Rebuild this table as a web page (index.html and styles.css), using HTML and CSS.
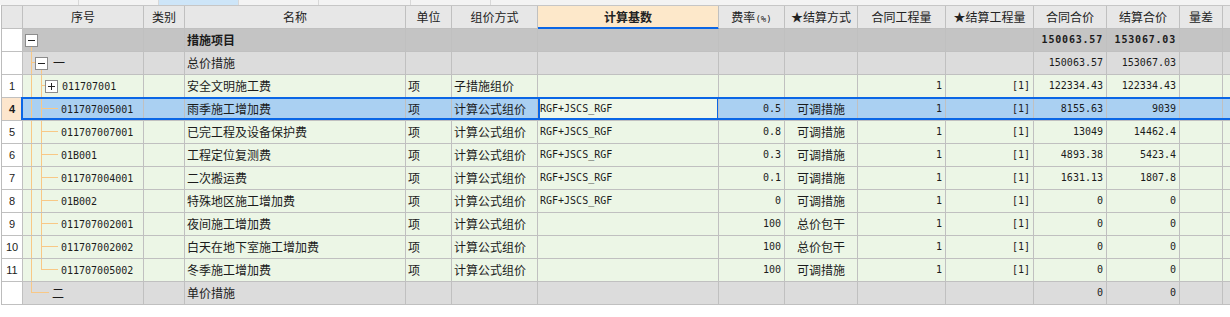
FILE: index.html
```html
<!DOCTYPE html>
<html lang="zh-CN">
<head>
<meta charset="utf-8">
<title>措施项目</title>
<link rel="stylesheet" href="styles.css">
</head>
<body>
<div class="strip"><span></span><span></span><span class="on"></span><span></span><span class="wide"></span><span></span></div>
<div class="grid">
  <div class="row hdr">
    <div class="c rn"></div>
    <div class="c h">序号</div>
    <div class="c h">类别</div>
    <div class="c h">名称</div>
    <div class="c h">单位</div>
    <div class="c h">组价方式</div>
    <div class="c h hot">计算基数</div>
    <div class="c h">费率<span class="pct">(%)</span></div>
    <div class="c h">★结算方式</div>
    <div class="c h">合同工程量</div>
    <div class="c h">★结算工程量</div>
    <div class="c h">合同合价</div>
    <div class="c h">结算合价</div>
    <div class="c h">量差</div>
    <div class="c h"></div>
  </div>

  <div class="row g1">
    <div class="c rn"></div>
    <div class="c seq lv1 t-top"><span class="bx"></span></div>
    <div class="c"></div>
    <div class="c b">措施项目</div>
    <div class="c"></div><div class="c"></div><div class="c"></div><div class="c"></div><div class="c"></div><div class="c"></div><div class="c"></div>
    <div class="c m r b">150063.57</div>
    <div class="c m r b">153067.03</div>
    <div class="c"></div><div class="c"></div>
  </div>

  <div class="row g2">
    <div class="c rn"></div>
    <div class="c seq lv2 t-head"><span class="bx"></span><span class="lab">一</span></div>
    <div class="c"></div>
    <div class="c">总价措施</div>
    <div class="c"></div><div class="c"></div><div class="c"></div><div class="c"></div><div class="c"></div><div class="c"></div><div class="c"></div>
    <div class="c m r">150063.57</div>
    <div class="c m r">153067.03</div>
    <div class="c"></div><div class="c"></div>
  </div>

  <div class="row d">
    <div class="c rn">1</div>
    <div class="c seq lv3 t-plus"><span class="bx plus"></span><span class="code">011707001</span></div>
    <div class="c"></div>
    <div class="c">安全文明施工费</div>
    <div class="c">项</div>
    <div class="c">子措施组价</div>
    <div class="c"></div>
    <div class="c"></div>
    <div class="c"></div>
    <div class="c m r">1</div>
    <div class="c m r">[1]</div>
    <div class="c m r">122334.43</div>
    <div class="c m r">122334.43</div>
    <div class="c"></div><div class="c"></div>
  </div>

  <div class="row d sel">
    <div class="c rn">4</div>
    <div class="c seq leaf t-leaf"><span class="code">011707005001</span></div>
    <div class="c"></div>
    <div class="c">雨季施工增加费</div>
    <div class="c">项</div>
    <div class="c">计算公式组价</div>
    <div class="c m edit">RGF+JSCS_RGF</div>
    <div class="c m r">0.5</div>
    <div class="c ctr">可调措施</div>
    <div class="c m r">1</div>
    <div class="c m r">[1]</div>
    <div class="c m r">8155.63</div>
    <div class="c m r">9039</div>
    <div class="c"></div><div class="c"></div>
  </div>

  <div class="row d">
    <div class="c rn">5</div>
    <div class="c seq leaf t-leaf"><span class="code">011707007001</span></div>
    <div class="c"></div>
    <div class="c">已完工程及设备保护费</div>
    <div class="c">项</div>
    <div class="c">计算公式组价</div>
    <div class="c m">RGF+JSCS_RGF</div>
    <div class="c m r">0.8</div>
    <div class="c ctr">可调措施</div>
    <div class="c m r">1</div>
    <div class="c m r">[1]</div>
    <div class="c m r">13049</div>
    <div class="c m r">14462.4</div>
    <div class="c"></div><div class="c"></div>
  </div>

  <div class="row d">
    <div class="c rn">6</div>
    <div class="c seq leaf t-leaf"><span class="code">01B001</span></div>
    <div class="c"></div>
    <div class="c">工程定位复测费</div>
    <div class="c">项</div>
    <div class="c">计算公式组价</div>
    <div class="c m">RGF+JSCS_RGF</div>
    <div class="c m r">0.3</div>
    <div class="c ctr">可调措施</div>
    <div class="c m r">1</div>
    <div class="c m r">[1]</div>
    <div class="c m r">4893.38</div>
    <div class="c m r">5423.4</div>
    <div class="c"></div><div class="c"></div>
  </div>

  <div class="row d">
    <div class="c rn">7</div>
    <div class="c seq leaf t-leaf"><span class="code">011707004001</span></div>
    <div class="c"></div>
    <div class="c">二次搬运费</div>
    <div class="c">项</div>
    <div class="c">计算公式组价</div>
    <div class="c m">RGF+JSCS_RGF</div>
    <div class="c m r">0.1</div>
    <div class="c ctr">可调措施</div>
    <div class="c m r">1</div>
    <div class="c m r">[1]</div>
    <div class="c m r">1631.13</div>
    <div class="c m r">1807.8</div>
    <div class="c"></div><div class="c"></div>
  </div>

  <div class="row d">
    <div class="c rn">8</div>
    <div class="c seq leaf t-leaf"><span class="code">01B002</span></div>
    <div class="c"></div>
    <div class="c">特殊地区施工增加费</div>
    <div class="c">项</div>
    <div class="c">计算公式组价</div>
    <div class="c m">RGF+JSCS_RGF</div>
    <div class="c m r">0</div>
    <div class="c ctr">可调措施</div>
    <div class="c m r">1</div>
    <div class="c m r">[1]</div>
    <div class="c m r">0</div>
    <div class="c m r">0</div>
    <div class="c"></div><div class="c"></div>
  </div>

  <div class="row d">
    <div class="c rn">9</div>
    <div class="c seq leaf t-leaf"><span class="code">011707002001</span></div>
    <div class="c"></div>
    <div class="c">夜间施工增加费</div>
    <div class="c">项</div>
    <div class="c">计算公式组价</div>
    <div class="c"></div>
    <div class="c m r">100</div>
    <div class="c ctr">总价包干</div>
    <div class="c m r">1</div>
    <div class="c m r">[1]</div>
    <div class="c m r">0</div>
    <div class="c m r">0</div>
    <div class="c"></div><div class="c"></div>
  </div>

  <div class="row d">
    <div class="c rn">10</div>
    <div class="c seq leaf t-leaf"><span class="code">011707002002</span></div>
    <div class="c"></div>
    <div class="c">白天在地下室施工增加费</div>
    <div class="c">项</div>
    <div class="c">计算公式组价</div>
    <div class="c"></div>
    <div class="c m r">100</div>
    <div class="c ctr">总价包干</div>
    <div class="c m r">1</div>
    <div class="c m r">[1]</div>
    <div class="c m r">0</div>
    <div class="c m r">0</div>
    <div class="c"></div><div class="c"></div>
  </div>

  <div class="row d">
    <div class="c rn">11</div>
    <div class="c seq leaf t-last"><span class="code">011707005002</span></div>
    <div class="c"></div>
    <div class="c">冬季施工增加费</div>
    <div class="c">项</div>
    <div class="c">计算公式组价</div>
    <div class="c"></div>
    <div class="c m r">100</div>
    <div class="c ctr">可调措施</div>
    <div class="c m r">1</div>
    <div class="c m r">[1]</div>
    <div class="c m r">0</div>
    <div class="c m r">0</div>
    <div class="c"></div><div class="c"></div>
  </div>

  <div class="row g2">
    <div class="c rn"></div>
    <div class="c seq lv2b t-end"><span class="lab">二</span></div>
    <div class="c"></div>
    <div class="c">单价措施</div>
    <div class="c"></div><div class="c"></div><div class="c"></div><div class="c"></div><div class="c"></div><div class="c"></div><div class="c"></div>
    <div class="c m r">0</div>
    <div class="c m r">0</div>
    <div class="c"></div><div class="c"></div>
  </div>
</div>
</body>
</html>
```

FILE: styles.css
```css
:root {
  --grid: #c0c0c0;
  --tl: #f8c886;
  --blue: #0a66e6;
}

body {
  margin: 0;
  width: 1230px;
  height: 317px;
  overflow: hidden;
  background: #fff;
  color: #1b1b1b;
  font: 12px "Noto Sans CJK SC", sans-serif;
}

.strip {
  display: flex;
  height: 5px;
  background: #f3f3f3;
  overflow: hidden;
}
.strip span {
  width: 79px;
  flex: none;
  box-sizing: border-box;
  border-right: 1px solid #d8d8d8;
}
.strip span + span { width: 80px; }
.strip span.wide { width: 92px; }
.strip span.on { background: #cde5f8; }

.grid {
  width: 1229px;
  box-sizing: border-box;
  margin-left: 1px;
  border-left: 1px solid #bcbcbc;
  border-top: 1px solid #c6c6c6;
  overflow: hidden;
}

.row {
  --bg: #ecf6e6;
  position: relative;
  display: grid;
  grid-template-columns: 21px 121px 41px 221px 46px 86px 181px 66px 73px 88px 88px 73px 73px 43px 1fr;
  height: 23px;
}

.c {
  box-sizing: border-box;
  height: 23px;
  min-width: 0;
  padding: 0 2px;
  border-right: 1px solid var(--grid);
  border-bottom: 1px solid var(--grid);
  background: var(--bg);
  line-height: 22px;
  white-space: nowrap;
  overflow: hidden;
}
.c:last-child { border-right: 0; padding: 0; }

.hdr { --bg: #e7e7e7; }
.g1 { --bg: #c4c4c4; }
.g2 { --bg: #dcdcdc; }
.sel { --bg: #aad0f2; }

.rn {
  padding: 0;
  text-align: center;
  font: 11px "Liberation Sans", Arial, sans-serif;
  line-height: 22px;
  background: #fff;
}
.hdr .rn { background: var(--bg); }
.sel .rn { background: #fde6cd; font-weight: bold; }

.h { text-align: center; color: #222; }
.hot {
  background: #fde8ca;
  font-weight: bold;
  border-bottom-color: var(--blue);
  box-shadow: inset 0 -1px 0 var(--blue);
}
.pct {
  font: 9px "DejaVu Sans Mono", monospace;
}

.b { font-weight: bold; }
.ctr { text-align: center; padding: 0; }

.m {
  font-family: "DejaVu Sans Mono", monospace;
  font-size: 10px;
}
.m.b { letter-spacing: 0.8px; }
.r { text-align: right; padding-right: 3px; }

/* tree column */
.seq {
  display: flex;
  align-items: center;
  padding: 0;
  background-repeat: no-repeat;
}
.lv1 { padding-left: 2px; }
.lv2 { padding-left: 12px; }
.lv3 { padding-left: 22px; }
.leaf { padding-left: 38px; }
.lv2b { padding-left: 29px; }

.lab { margin-left: 5px; }
.lv2b .lab { margin-left: 0; }
.code {
  margin-left: 4px;
  font: 10px "DejaVu Sans Mono", monospace;
}
.leaf .code { margin-left: 0; }

.bx {
  position: relative;
  flex: none;
  box-sizing: border-box;
  width: 13px;
  height: 13px;
  border: 1px solid #8c8c8c;
  background: #fff;
}
.bx::before {
  content: "";
  position: absolute;
  left: 2px;
  right: 2px;
  top: 5px;
  height: 1px;
  background: #222;
}
.bx.plus::after {
  content: "";
  position: absolute;
  top: 2px;
  bottom: 2px;
  left: 5px;
  width: 1px;
  background: #222;
}

.t-top {
  background:
    linear-gradient(var(--tl), var(--tl)) 8px 17px / 1px 100% no-repeat,
    var(--bg);
}
.t-head {
  background:
    linear-gradient(var(--tl), var(--tl)) 8px 0 / 1px 100% no-repeat,
    linear-gradient(var(--tl), var(--tl)) 8px 10px / 4px 1px no-repeat,
    linear-gradient(var(--tl), var(--tl)) 18px 17px / 1px 100% no-repeat,
    var(--bg);
}
.t-plus {
  background:
    linear-gradient(var(--tl), var(--tl)) 8px 0 / 1px 100% no-repeat,
    linear-gradient(var(--tl), var(--tl)) 18px 0 / 1px 100% no-repeat,
    linear-gradient(var(--tl), var(--tl)) 18px 10px / 4px 1px no-repeat,
    var(--bg);
}
.t-leaf {
  background:
    linear-gradient(var(--tl), var(--tl)) 8px 0 / 1px 100% no-repeat,
    linear-gradient(var(--tl), var(--tl)) 18px 0 / 1px 100% no-repeat,
    linear-gradient(var(--tl), var(--tl)) 18px 10px / 17px 1px no-repeat,
    var(--bg);
}
.t-last {
  background:
    linear-gradient(var(--tl), var(--tl)) 8px 0 / 1px 100% no-repeat,
    linear-gradient(var(--tl), var(--tl)) 18px 0 / 1px 11px no-repeat,
    linear-gradient(var(--tl), var(--tl)) 18px 10px / 17px 1px no-repeat,
    var(--bg);
}
.t-end {
  background:
    linear-gradient(var(--tl), var(--tl)) 8px 0 / 1px 11px no-repeat,
    linear-gradient(var(--tl), var(--tl)) 8px 10px / 18px 1px no-repeat,
    var(--bg);
}

/* selection */
.sel::after {
  content: "";
  position: absolute;
  left: 19px;
  right: -3px;
  top: -1px;
  height: 23px;
  box-sizing: border-box;
  border: 2px solid var(--blue);
  pointer-events: none;
}
.edit {
  position: relative;
  background: #eef7e9;
}
.edit::after {
  content: "";
  position: absolute;
  left: 0;
  right: -1px;
  top: -1px;
  bottom: 0;
  border: 2px solid var(--blue);
  z-index: 1;
}
```
